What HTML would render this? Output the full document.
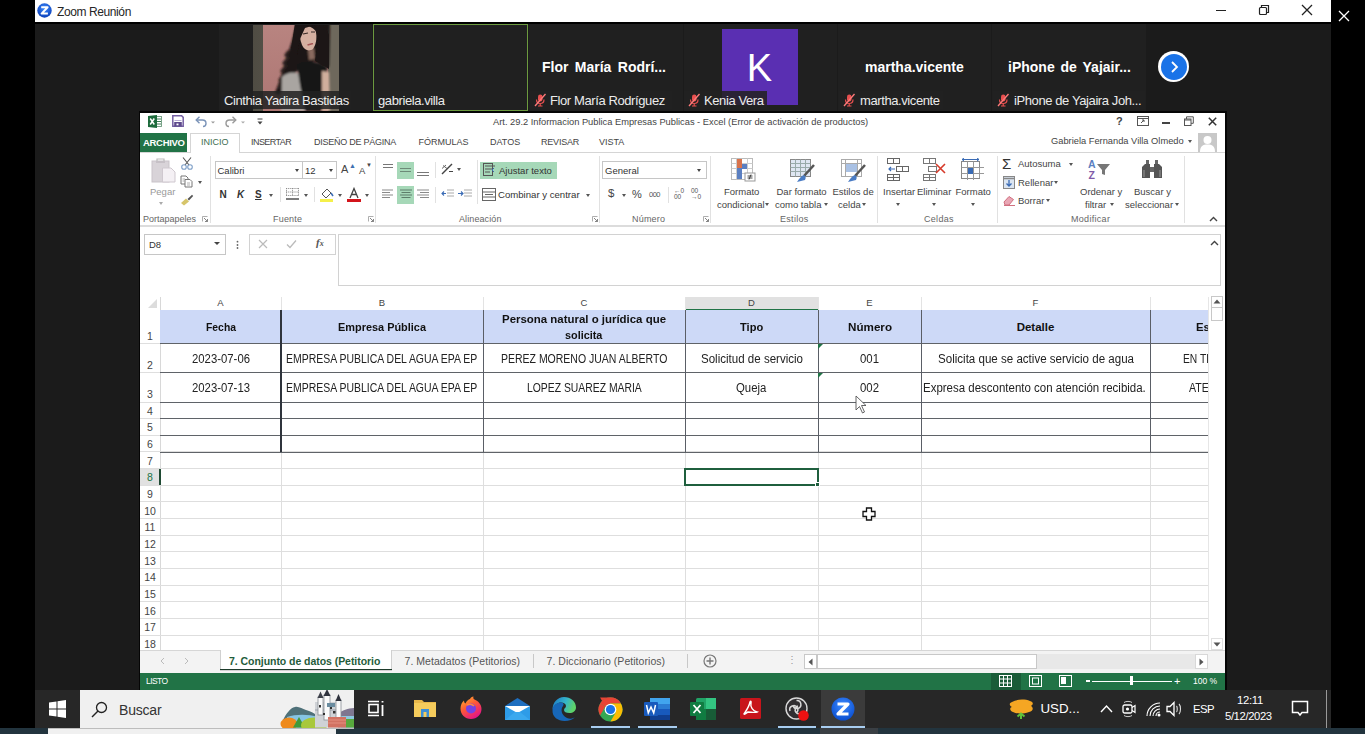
<!DOCTYPE html>
<html><head><meta charset="utf-8">
<style>
*{margin:0;padding:0;box-sizing:border-box}
html,body{width:1365px;height:734px;overflow:hidden;background:#000;font-family:"Liberation Sans",sans-serif}
.a{position:absolute}
#ztitle{left:35px;top:0;width:1296px;height:22px;background:#fff}
#zdark{left:35px;top:22px;width:1296px;height:668px;background:#1b1b1b}
#excel{left:140px;top:112px;width:1084px;height:578px;background:#fff;overflow:hidden}
#taskbar{left:35px;top:690px;width:1296px;height:38px;background:#282828}
#bstrip{left:0;top:728px;width:1365px;height:6px;background:#1d2b33}

.glab{height:18px;background:rgba(34,34,34,.86)}
.glab span{position:absolute;top:2px;font-size:13px;letter-spacing:-0.4px;color:#ececec;line-height:16px;white-space:nowrap}
.gbold{font-size:14px;font-weight:700;color:#fff;line-height:18px;white-space:nowrap}
.mic{position:absolute;left:3px;top:2px;width:14px;height:14px}

#excel{left:140px;top:112.5px;width:1085.2px;height:577.5px;background:#fff;overflow:hidden}
.t{position:absolute;white-space:nowrap;line-height:1}
.tab{font-size:9px;color:#444;top:138px}
.rl{font-size:9px;color:#444}
.gl{font-size:9px;color:#666;top:214.5px}
.sep{position:absolute;width:1px;background:#e1e1e1}
.hl{position:absolute;height:1px}
.vl{position:absolute;width:1px}
.cell{position:absolute;white-space:nowrap;line-height:1;color:#1a1a1a;text-align:center}
.rn{position:absolute;width:20px;left:140px;text-align:center;font-size:10.5px;color:#444;line-height:1}
.dd{position:absolute;width:0;height:0;border-left:2.5px solid transparent;border-right:2.5px solid transparent;border-top:3px solid #555}

#taskbar{left:35px;top:690px;width:1296px;height:38px;background:#272727}
#bstrip{left:0;top:728px;width:1365px;height:6px;background:#22343e}
</style></head><body>
<!-- zoom title -->
<div id="ztitle" class="a">
 <svg class="a" style="left:2px;top:3px" width="15" height="15" viewBox="0 0 15 15"><defs><radialGradient id="zg" cx="50%" cy="35%" r="65%"><stop offset="0" stop-color="#3d8bff"/><stop offset="1" stop-color="#0b3fb8"/></radialGradient></defs><circle cx="7.5" cy="7.5" r="7.2" fill="url(#zg)"/><path d="M4.2 4.3H10.6L4.6 10.6H10.9" stroke="#fff" stroke-width="2" fill="none" stroke-linejoin="round"/></svg>
 <div class="a" style="left:22px;top:3.5px;font-size:12px;letter-spacing:-0.4px;color:#262626;line-height:16px">Zoom Reunión</div>
 <div class="a" style="left:1181px;top:9.5px;width:10px;height:1px;background:#222"></div>
 <svg class="a" style="left:1223px;top:4px" width="12" height="12" viewBox="0 0 12 12"><rect x="1.5" y="3.5" width="7" height="7" fill="none" stroke="#222" stroke-width="1.2" rx="1"/><path d="M3.5 3.5V1.5H10.5V8.5H8.5" fill="none" stroke="#222" stroke-width="1.2"/></svg>
 <svg class="a" style="left:1266px;top:4px" width="12" height="12" viewBox="0 0 12 12"><path d="M1 1L11 11M11 1L1 11" stroke="#222" stroke-width="1.3"/></svg>
</div>
<div id="zdark" class="a"></div>
<div class="a" style="left:35px;top:22px;width:1296px;height:2px;background:#000"></div>

<svg class="a" style="left:1338px;top:10px" width="12" height="12" viewBox="0 0 12 12"><path d="M1 1L11 11M11 1L1 11" stroke="#fff" stroke-width="1.3"/></svg>
<!-- gallery tiles -->
<div class="a" style="left:219px;top:24px;width:153px;height:87px;background:#202020"></div>
<svg class="a" style="left:253px;top:24.5px" width="86" height="86" viewBox="0 0 86 86">
 <defs><filter id="bl" x="-20%" y="-20%" width="140%" height="140%"><feGaussianBlur stdDeviation="1.1"/></filter><filter id="bl2" x="-20%" y="-20%" width="140%" height="140%"><feGaussianBlur stdDeviation="0.7"/></filter>
 <linearGradient id="wall" x1="0" y1="0" x2="0" y2="1"><stop offset="0" stop-color="#b88480"/><stop offset="1" stop-color="#ad7673"/></linearGradient>
 <linearGradient id="lstrip" x1="0" y1="0" x2="1" y2="0"><stop offset="0" stop-color="#4f4c43"/><stop offset="1" stop-color="#6b675b"/></linearGradient></defs>
 <rect width="86" height="86" fill="url(#lstrip)"/>
 <rect x="10" width="66" height="86" fill="url(#wall)"/>
 <rect x="75" width="11" height="86" fill="#6e685c"/>
 <g filter="url(#bl)">
  <path d="M44 -3C41 6 40 14 37 22C35 28 34 32 32 38C30 44 29 48 27 54C26 58 24 62 22 68L26 70L30 66L34 62L40 50L50 40L62 36L76 42L77 -3Z" fill="#1a1413"/>
  <path d="M36 26L33 30L35 33L31 38L33 41L29 46L31 49L27 55L29 58L25 64" stroke="#2a201e" stroke-width="3" fill="none"/>
  <path d="M29 52C34 47 42 46 48 50L54 86H28Z" fill="#a9a5a1"/>
  <path d="M44 40C52 35 66 36 74 42L75 86H52L47 60Z" fill="#151515"/>
  <path d="M69 46L76 47L77 86H69Z" fill="#cfae9c"/>
  <path d="M55 25L61 23L62 34L56 35Z" fill="#8a6a5e"/>
 </g>
 <path d="M47 3C52 0 60 1 63 7C64 13 63 20 60 24C56 27 51 25 49 20C47 15 46 8 47 3Z" fill="#d5b0a1" filter="url(#bl2)"/>
 <path d="M50 9L55 8M58 7L62 7" stroke="#3a2a28" stroke-width="1.2" filter="url(#bl2)"/>
 <path d="M54.5 20L60 18.5" stroke="#a55555" stroke-width="1.6" filter="url(#bl2)"/>
 <path d="M42 -2C48 -4 58 -3 62 0L52 3L47 14L44 30L38 24Z" fill="#1c1514" filter="url(#bl2)"/>
 <path d="M62 2L70 -1L76 10L76 44L62 36L65 14Z" fill="#1c1514" filter="url(#bl2)"/>
</svg>
<div class="a glab" style="left:221px;top:91px;width:130px"><span style="left:3px">Cinthia Yadira Bastidas</span></div>
<div class="a" style="left:373px;top:24px;width:155px;height:87px;background:#202020;border:1px solid #6c9a3f"></div>
<div class="a glab" style="left:375px;top:91px;width:75px"><span style="left:3px">gabriela.villa</span></div>
<div class="a" style="left:529px;top:24px;width:154px;height:87px;background:#202020"></div>
<div class="a gbold" style="left:542px;top:58px;word-spacing:2.5px">Flor María Rodrí...</div>
<div class="a glab" style="left:530px;top:91px;width:142px"><svg class="mic" viewBox="0 0 14 14"><rect x="5" y="1.5" width="4.5" height="7" rx="2.2" fill="#e8504f"/><path d="M3.5 6.5C3.5 9 5 10.5 7.2 10.5C9.5 10.5 11 9 11 6.5M7.2 10.5V13M5 13H9.5" stroke="#e8504f" stroke-width="1.2" fill="none"/><path d="M2 13L12.5 1" stroke="#ff7a7a" stroke-width="1.3"/></svg><span style="left:20px">Flor María Rodríguez</span></div>
<div class="a" style="left:684px;top:24px;width:153px;height:87px;background:#202020"></div>
<div class="a" style="left:722px;top:29px;width:76px;height:76px;background:#5a2fb2"></div>
<div class="a" style="left:722px;top:47px;width:76px;text-align:center;color:#fff;font-size:38px;line-height:42px;padding-right:1px">K</div>
<div class="a glab" style="left:684px;top:91px;width:83px"><svg class="mic" viewBox="0 0 14 14"><rect x="5" y="1.5" width="4.5" height="7" rx="2.2" fill="#e8504f"/><path d="M3.5 6.5C3.5 9 5 10.5 7.2 10.5C9.5 10.5 11 9 11 6.5M7.2 10.5V13M5 13H9.5" stroke="#e8504f" stroke-width="1.2" fill="none"/><path d="M2 13L12.5 1" stroke="#ff7a7a" stroke-width="1.3"/></svg><span style="left:20px">Kenia Vera</span></div>
<div class="a" style="left:838px;top:24px;width:153px;height:87px;background:#202020"></div>
<div class="a gbold" style="left:865px;top:58px">martha.vicente</div>
<div class="a glab" style="left:839px;top:91px;width:104px"><svg class="mic" viewBox="0 0 14 14"><rect x="5" y="1.5" width="4.5" height="7" rx="2.2" fill="#e8504f"/><path d="M3.5 6.5C3.5 9 5 10.5 7.2 10.5C9.5 10.5 11 9 11 6.5M7.2 10.5V13M5 13H9.5" stroke="#e8504f" stroke-width="1.2" fill="none"/><path d="M2 13L12.5 1" stroke="#ff7a7a" stroke-width="1.3"/></svg><span style="left:21px">martha.vicente</span></div>
<div class="a" style="left:992px;top:24px;width:154px;height:87px;background:#202020"></div>
<div class="a gbold" style="left:1008px;top:58px;word-spacing:2px">iPhone de Yajair...</div>
<div class="a glab" style="left:993px;top:91px;width:152px"><svg class="mic" viewBox="0 0 14 14"><rect x="5" y="1.5" width="4.5" height="7" rx="2.2" fill="#e8504f"/><path d="M3.5 6.5C3.5 9 5 10.5 7.2 10.5C9.5 10.5 11 9 11 6.5M7.2 10.5V13M5 13H9.5" stroke="#e8504f" stroke-width="1.2" fill="none"/><path d="M2 13L12.5 1" stroke="#ff7a7a" stroke-width="1.3"/></svg><span style="left:21px">iPhone de Yajaira Joh...</span></div>
<div class="a" style="left:1158px;top:51px;width:31px;height:31px;border-radius:50%;background:#fff"></div>
<div class="a" style="left:1160.5px;top:53.5px;width:26px;height:26px;border-radius:50%;background:#1a73e8"></div>
<svg class="a" style="left:1166px;top:59px" width="16" height="16" viewBox="0 0 16 16"><path d="M6 3L11 8L6 13" stroke="#fff" stroke-width="1.8" fill="none"/></svg>

<div class="a" style="left:138.5px;top:111px;width:1088.5px;height:580px;background:#050505"></div>
<div id="excel" class="a"></div>
<svg class="a" style="left:148px;top:115px" width="14" height="13" viewBox="0 0 14 13">
<rect x="6" y="1.5" width="7.5" height="10" fill="#fff" stroke="#6c9a7c" stroke-width="0.9"/>
<path d="M7.5 4H13M7.5 6.5H13M7.5 9H13" stroke="#3f7d57" stroke-width="1"/>
<path d="M0 1L9 0V13L0 12Z" fill="#1d6b3c"/>
<path d="M2.2 3.5L6.3 9.5M6.3 3.5L2.2 9.5" stroke="#fff" stroke-width="1.5"/></svg>
<svg class="a" style="left:171.5px;top:115px" width="12" height="12" viewBox="0 0 12 12">
<path d="M0.8 0.8H9.6L11.2 2.4V11.2H0.8Z" fill="#fff" stroke="#7560a3" stroke-width="1.5"/>
<rect x="2.2" y="7" width="7.6" height="4.5" fill="#5e4a8c"/><rect x="4.5" y="8.5" width="2" height="1.8" fill="#fff"/><path d="M2.5 5.5H9.5" stroke="#b9acd3" stroke-width="1"/></svg>
<svg class="a" style="left:194px;top:115px" width="24" height="13" viewBox="0 0 24 13">
<path d="M3 5H8.5C11 5 12 7 12 8.5C12 10 11 11.5 9 11.5" fill="none" stroke="#7a93b8" stroke-width="1.4"/><path d="M5.5 1.8L2.2 5L5.5 8.2" fill="none" stroke="#7a93b8" stroke-width="1.4"/>
<path d="M17 6.5H21L19 8.5Z" fill="#999"/></svg>
<svg class="a" style="left:225px;top:115px" width="24" height="13" viewBox="0 0 24 13">
<path d="M10 5H4.5C2 5 1 7 1 8.5C1 10 2 11.5 4 11.5" fill="none" stroke="#9a9a9a" stroke-width="1.4"/><path d="M7.5 1.8L10.8 5L7.5 8.2" fill="none" stroke="#9a9a9a" stroke-width="1.4"/>
<path d="M16 6.5H20L18 8.5Z" fill="#aaa"/></svg>
<svg class="a" style="left:256px;top:117px" width="8" height="9" viewBox="0 0 8 9"><path d="M1.5 2H6.5" stroke="#444" stroke-width="1"/><path d="M1.5 4.5H6.5L4 7.5Z" fill="#444"/></svg>
<div class="t" style="left:493px;top:117.5px;font-size:9.3px;color:#444">Art. 29.2 Informacion Publica Empresas Publicas - Excel (Error de activación de productos)</div>
<div class="t" style="left:1116px;top:116px;font-size:11px;font-weight:700;color:#444">?</div>
<svg class="a" style="left:1137px;top:116px" width="12" height="10" viewBox="0 0 12 10"><rect x="0.5" y="0.5" width="11" height="9" fill="none" stroke="#555"/><path d="M0.5 2.5H11.5" stroke="#555"/><path d="M4 7L7 4M5 4H7V6" stroke="#555" fill="none"/></svg>
<div class="a" style="left:1162px;top:122px;width:8px;height:1.5px;background:#444"></div>
<svg class="a" style="left:1184px;top:116px" width="10" height="10" viewBox="0 0 10 10"><rect x="0.5" y="3" width="6.5" height="6.5" fill="none" stroke="#555"/><path d="M2.5 3V0.8H9.3V7.3H7" fill="none" stroke="#555"/><path d="M0.5 4H7" stroke="#555"/></svg>
<svg class="a" style="left:1208px;top:117px" width="9" height="9" viewBox="0 0 9 9"><path d="M0.8 0.8L8.2 8.2M8.2 0.8L0.8 8.2" stroke="#333" stroke-width="1.5"/></svg>
<div class="a" style="left:140px;top:133px;width:47px;height:19px;background:#217346"></div>
<div class="t" style="left:143px;top:138px;font-size:9.5px;font-weight:700;color:#fff;letter-spacing:-0.3px">ARCHIVO</div>
<div class="hl" style="left:140px;top:152px;width:1085px;background:#d5d5d5"></div>
<div class="a" style="left:190px;top:133px;width:50px;height:20px;background:#fff;border:1px solid #d5d5d5;border-bottom:none"></div>
<div class="t tab" style="left:201px;color:#3d6e50">INICIO</div>
<div class="t tab" style="left:251px;letter-spacing:-0.55px">INSERTAR</div>
<div class="t tab" style="left:314px;letter-spacing:-0.25px">DISEÑO DE PÁGINA</div>
<div class="t tab" style="left:418.5px;letter-spacing:0px">FÓRMULAS</div>
<div class="t tab" style="left:490px;letter-spacing:0px">DATOS</div>
<div class="t tab" style="left:541px;letter-spacing:-0.2px">REVISAR</div>
<div class="t tab" style="left:599px;letter-spacing:0px">VISTA</div>
<div class="t" style="left:1051px;top:137px;font-size:9.3px;color:#444">Gabriela Fernanda Villa Olmedo</div>
<div class="dd" style="left:1188px;top:140px"></div>
<svg class="a" style="left:1198px;top:133px" width="19" height="19" viewBox="0 0 19 19"><rect width="19" height="19" fill="#c8c8c8"/><circle cx="9.5" cy="7" r="4" fill="#fff"/><path d="M2 19C2 13 5 11.5 9.5 11.5C14 11.5 17 13 17 19Z" fill="#fff"/></svg>
<div class="hl" style="left:140px;top:225px;width:1085px;height:1.5px;background:#dcdcdc"></div>
<div class="sep" style="left:210px;top:156px;height:67px"></div>
<div class="sep" style="left:375px;top:156px;height:67px"></div>
<div class="sep" style="left:599px;top:156px;height:67px"></div>
<div class="sep" style="left:710px;top:156px;height:67px"></div>
<div class="sep" style="left:877px;top:156px;height:67px"></div>
<div class="sep" style="left:997px;top:156px;height:67px"></div>
<div class="sep" style="left:1184px;top:156px;height:67px"></div>
<div class="t gl" style="left:143px;letter-spacing:0px">Portapapeles</div>
<div class="t gl" style="left:273px;letter-spacing:0.2px">Fuente</div>
<div class="t gl" style="left:459px;letter-spacing:0.1px">Alineación</div>
<div class="t gl" style="left:632px;letter-spacing:0.2px">Número</div>
<div class="t gl" style="left:780px;letter-spacing:0.3px">Estilos</div>
<div class="t gl" style="left:924px;letter-spacing:0.3px">Celdas</div>
<div class="t gl" style="left:1071px;letter-spacing:0.3px">Modificar</div>
<svg class="a" style="left:202px;top:216px" width="6" height="6" viewBox="0 0 6 6"><path d="M0.5 5.5V0.5H5.5" fill="none" stroke="#999" stroke-width="0.8"/><path d="M2 2L5.5 5.5M5.5 3V5.5H3" fill="none" stroke="#777" stroke-width="0.9"/></svg>
<svg class="a" style="left:368px;top:216px" width="6" height="6" viewBox="0 0 6 6"><path d="M0.5 5.5V0.5H5.5" fill="none" stroke="#999" stroke-width="0.8"/><path d="M2 2L5.5 5.5M5.5 3V5.5H3" fill="none" stroke="#777" stroke-width="0.9"/></svg>
<svg class="a" style="left:592px;top:216px" width="6" height="6" viewBox="0 0 6 6"><path d="M0.5 5.5V0.5H5.5" fill="none" stroke="#999" stroke-width="0.8"/><path d="M2 2L5.5 5.5M5.5 3V5.5H3" fill="none" stroke="#777" stroke-width="0.9"/></svg>
<svg class="a" style="left:703px;top:216px" width="6" height="6" viewBox="0 0 6 6"><path d="M0.5 5.5V0.5H5.5" fill="none" stroke="#999" stroke-width="0.8"/><path d="M2 2L5.5 5.5M5.5 3V5.5H3" fill="none" stroke="#777" stroke-width="0.9"/></svg>
<svg class="a" style="left:151px;top:158px" width="26" height="25" viewBox="0 0 26 25">
<rect x="1" y="3" width="17" height="21" fill="#d8d3d8" stroke="#c9c3c9"/><path d="M6 3V1H13V3" fill="none" stroke="#bbb" stroke-width="1.2"/><rect x="5" y="3" width="9" height="2" fill="#c6c0c6"/>
<path d="M11.5 10H20L24 14V24H11.5Z" fill="#f4f0f4" stroke="#cfc8cf"/></svg>
<div class="t rl" style="left:150px;top:187px;font-size:9.5px;color:#999">Pegar</div>
<div class="dd" style="left:159px;top:202px;border-top-color:#aaa"></div>
<svg class="a" style="left:180px;top:157px" width="14" height="13" viewBox="0 0 14 13"><path d="M3 0.5L9 8M11 0.5L5 8" stroke="#555" stroke-width="1.1"/><circle cx="4" cy="10" r="2.3" fill="none" stroke="#7fa0c8" stroke-width="1.1"/><circle cx="10" cy="10" r="2.3" fill="none" stroke="#7fa0c8" stroke-width="1.1"/></svg>
<svg class="a" style="left:180px;top:175px" width="14" height="13" viewBox="0 0 14 13"><path d="M1 1H6L8 3V9H1Z" fill="#fff" stroke="#777"/><path d="M5 4.5H10L12 6.5V12H5Z" fill="#fff" stroke="#777"/><path d="M2.5 4H5M2.5 6H4.5M7 8H10M7 10H10" stroke="#999" stroke-width="0.8"/></svg>
<div class="dd" style="left:198px;top:181px"></div>
<svg class="a" style="left:180px;top:194px" width="14" height="12" viewBox="0 0 14 12"><path d="M1 9L6 4.5L9 7.5L4 11.5Z" fill="#d6c56a"/><path d="M7.5 5L12 0.8L13.2 2L9 6.5" fill="#555"/></svg>
<div class="a" style="left:215px;top:161px;width:122px;height:18px;border:1px solid #c6c6c6"></div>
<div class="vl" style="left:302px;top:162px;height:16px;background:#c6c6c6"></div>
<div class="t" style="left:217.5px;top:165.5px;font-size:9.5px;color:#333">Calibri</div>
<div class="dd" style="left:295px;top:169px;border-top-color:#444"></div>
<div class="t" style="left:305px;top:165.5px;font-size:9.5px;color:#333">12</div>
<div class="dd" style="left:329px;top:169px;border-top-color:#444"></div>
<div class="t" style="left:341px;top:164px;font-size:11px;color:#444">A</div><div class="t" style="left:349px;top:162px;font-size:7px;color:#3f6fb0">&#9650;</div>
<div class="t" style="left:359px;top:165.5px;font-size:9.5px;color:#444">A</div><div class="t" style="left:366px;top:162px;font-size:6px;color:#444">&#9660;</div>
<div class="t" style="left:219.5px;top:189.5px;font-size:10px;font-weight:700;color:#333">N</div>
<div class="t" style="left:237px;top:189.5px;font-size:10px;font-weight:700;font-style:italic;color:#333">K</div>
<div class="t" style="left:255px;top:189.5px;font-size:10px;font-weight:700;color:#333;text-decoration:underline">S</div>
<div class="dd" style="left:269px;top:194px"></div>
<div class="sep" style="left:280px;top:187px;height:15px"></div>
<svg class="a" style="left:286px;top:188px" width="13" height="12" viewBox="0 0 13 12"><path d="M0 0.5H13M0 4H13M0 7.5H13" stroke="#888" stroke-width="0.9" stroke-dasharray="1.2 0.9"/><path d="M0.5 0V8M6.5 0V8M12.5 0V8" stroke="#888" stroke-width="0.9" stroke-dasharray="1.2 0.9"/><path d="M0 11H13" stroke="#444" stroke-width="1.4"/></svg>
<div class="dd" style="left:304px;top:194px"></div>
<div class="sep" style="left:314px;top:187px;height:15px"></div>
<svg class="a" style="left:320px;top:187px" width="14" height="15" viewBox="0 0 14 15"><path d="M2 7L7 2L11 6L6 11Z" fill="#fff" stroke="#555"/><path d="M11 6L13 9" stroke="#3a6bb5" stroke-width="1.5"/><rect x="0" y="12" width="13" height="3" fill="#f5f04a"/></svg>
<div class="dd" style="left:338px;top:194px"></div>
<svg class="a" style="left:347px;top:187px" width="14" height="15" viewBox="0 0 14 15"><path d="M3 11L7 1.5L11 11M4.5 7.5H9.5" fill="none" stroke="#444" stroke-width="1.3"/><rect x="0" y="12" width="14" height="3" fill="#d3141b"/></svg>
<div class="dd" style="left:365px;top:194px"></div>
<div class="a" style="left:397px;top:161.5px;width:17px;height:17px;background:#a6d8b8"></div>
<div class="a" style="left:397px;top:186px;width:17px;height:17.5px;background:#a6d8b8"></div>
<svg class="a" style="left:383px;top:163.5px" width="10" height="4.5"><path d="M0 0.5H10M0 3.5H10" stroke="#777" stroke-width="1"/></svg>
<svg class="a" style="left:400px;top:167.5px" width="11" height="4.5"><path d="M0 0.5H11M0 3.5H11" stroke="#6d8a78" stroke-width="1"/></svg>
<svg class="a" style="left:417px;top:172px" width="12" height="4.5"><path d="M0 0.5H12M0 3.5H12" stroke="#777" stroke-width="1"/></svg>
<div class="sep" style="left:435px;top:162px;height:16px"></div>
<svg class="a" style="left:440px;top:162px" width="14" height="14" viewBox="0 0 14 14"><path d="M2 12L12 2" stroke="#444" stroke-width="1.4"/><path d="M3 3.5L7 6.5M2 6.5L6 3" stroke="#666" stroke-width="1"/><path d="M9 9.5L13 9.5" stroke="#444"/></svg>
<div class="dd" style="left:457px;top:168px"></div>
<svg class="a" style="left:382px;top:189px" width="48" height="10"><path d="M0 1H11M0 3.5H8M0 6H11M0 8.5H8" stroke="#8a8a8a" stroke-width="1.1"/><path d="M18 1H30M19.5 3.5H28.5M18 6H30M19.5 8.5H28.5" stroke="#5d7d6a" stroke-width="1.1"/><path d="M35 1H47M38 3.5H47M35 6H47M38 8.5H47" stroke="#8a8a8a" stroke-width="1.1"/></svg>
<div class="sep" style="left:435px;top:187px;height:16px"></div>
<svg class="a" style="left:441px;top:189px" width="32" height="10" viewBox="0 0 32 10"><path d="M6 1H13M6 4H13M6 7H13" stroke="#aaa"/><path d="M5 4.5H1M3 2.5L1 4.5L3 6.5" stroke="#3a6bb5" fill="none" stroke-width="1.1"/><path d="M23 1H31M23 4H31M23 7H31" stroke="#aaa"/><path d="M17 4.5H22M20 2.5L22 4.5L20 6.5" stroke="#3a6bb5" fill="none" stroke-width="1.1"/></svg>
<div class="sep" style="left:477px;top:160px;height:44px"></div>
<div class="a" style="left:480px;top:161.5px;width:76.5px;height:17px;background:#a6d8b8"></div>
<svg class="a" style="left:483px;top:163px" width="14" height="13" viewBox="0 0 14 13"><rect x="0.5" y="0.5" width="9" height="12" fill="none" stroke="#555"/><path d="M2 3H12M2 6H9M2 9H7" stroke="#555"/><path d="M11 5L9 7L11 9" stroke="#3a6bb5" fill="none"/></svg>
<div class="t" style="left:499px;top:165.5px;font-size:9.5px;color:#333">Ajustar texto</div>
<svg class="a" style="left:482px;top:188px" width="14" height="13" viewBox="0 0 14 13"><rect x="0.5" y="0.5" width="13" height="12" fill="none" stroke="#666"/><path d="M0.5 4H13.5M0.5 9H13.5M3 6.5H11" stroke="#666"/></svg>
<div class="t" style="left:498px;top:190px;font-size:9.6px;color:#333">Combinar y centrar</div>
<div class="dd" style="left:586px;top:194px"></div>
<div class="a" style="left:602px;top:161px;width:105px;height:18px;border:1px solid #c6c6c6"></div>
<div class="t" style="left:605px;top:165.5px;font-size:9.5px;color:#333">General</div>
<div class="dd" style="left:697px;top:169px;border-top-color:#444"></div>
<div class="t" style="left:608px;top:188px;font-size:11.5px;color:#444">$</div>
<div class="dd" style="left:622px;top:194px"></div>
<div class="t" style="left:632px;top:189px;font-size:11px;color:#444">%</div>
<div class="t" style="left:649px;top:191px;font-size:7.5px;color:#555;letter-spacing:-0.5px">000</div>
<div class="sep" style="left:668px;top:187px;height:16px"></div>
<div class="t" style="left:674px;top:188px;font-size:6.5px;color:#555;line-height:6px">&#8592;0<br>00</div>
<div class="t" style="left:691px;top:188px;font-size:6.5px;color:#555;line-height:6px">00<br>&#8594;0</div>
<svg class="a" style="left:731px;top:158px" width="25" height="24" viewBox="0 0 25 24">
<rect x="0.5" y="0.5" width="21" height="21" fill="#fff" stroke="#bbb"/><path d="M0.5 5.5H21.5M0.5 10.5H21.5M0.5 15.5H21.5M5.5 0.5V21.5M16.5 0.5V21.5" stroke="#ccc"/>
<rect x="6" y="1" width="5" height="9" fill="#d9734c"/><rect x="6" y="10" width="5" height="11" fill="#5b7fc1"/><rect x="11" y="6" width="5" height="5" fill="#5b7fc1"/>
<rect x="14" y="15" width="10" height="8" fill="#fff" stroke="#999"/><path d="M16.5 18H21.5M16.5 20H21.5M20 16.5L18 21.5" stroke="#333" stroke-width="0.9"/></svg>
<div class="t rl" style="left:724px;top:186.5px;font-size:9.5px">Formato</div>
<div class="t rl" style="left:717px;top:199.5px;font-size:9.5px">condicional</div>
<div class="dd" style="left:765px;top:203px"></div>
<svg class="a" style="left:790px;top:159px" width="26" height="24" viewBox="0 0 26 24">
<rect x="0.5" y="0.5" width="20" height="17" fill="#dfe6f2" stroke="#888"/><path d="M0.5 4.5H20.5M0.5 8.5H20.5M0.5 12.5H20.5M5.5 0.5V17.5M10.5 0.5V17.5M15.5 0.5V17.5" stroke="#9aa"/>
<path d="M24 6L14 17" stroke="#555" stroke-width="2.5"/><path d="M14 16C11 17 9 20 7 23L15 21C16 19 16 17 14 16Z" fill="#4a7cc4"/></svg>
<div class="t rl" style="left:776.5px;top:186.5px;font-size:9.5px">Dar formato</div>
<div class="t rl" style="left:775px;top:199.5px;font-size:9.5px">como tabla</div>
<div class="dd" style="left:824px;top:203px"></div>
<svg class="a" style="left:841px;top:159px" width="26" height="24" viewBox="0 0 26 24">
<rect x="0.5" y="0.5" width="20" height="17" fill="#fff" stroke="#aaa"/><path d="M0.5 4.5H20.5M4.5 0.5V17.5M16.5 0.5V17.5" stroke="#aaa"/><rect x="5" y="5" width="11" height="8" fill="#a9c1e4"/>
<path d="M24 6L14 17" stroke="#555" stroke-width="2.5"/><path d="M14 16C11 17 9 20 7 23L15 21C16 19 16 17 14 16Z" fill="#4a7cc4"/></svg>
<div class="t rl" style="left:832.5px;top:186.5px;font-size:9.5px">Estilos de</div>
<div class="t rl" style="left:838px;top:199.5px;font-size:9.5px">celda</div>
<div class="dd" style="left:862px;top:203px"></div>
<svg class="a" style="left:887px;top:158px" width="22" height="23" viewBox="0 0 22 23">
<rect x="0.5" y="0.5" width="12" height="5" fill="#fff" stroke="#666"/><path d="M6.5 0.5V5.5" stroke="#666"/>
<rect x="9.5" y="8.5" width="12" height="5" fill="#fff" stroke="#666"/><path d="M15.5 8.5V13.5" stroke="#666"/>
<path d="M8 11H2M4 9L2 11L4 13" stroke="#3a6bb5" fill="none" stroke-width="1.2"/>
<rect x="0.5" y="16.5" width="12" height="6" fill="#fff" stroke="#666"/><path d="M0.5 19.5H12.5M6.5 16.5V22.5" stroke="#666"/></svg>
<div class="t rl" style="left:883px;top:186.5px;font-size:9.5px">Insertar</div>
<div class="dd" style="left:896px;top:203px"></div>
<svg class="a" style="left:923px;top:158px" width="24" height="23" viewBox="0 0 24 23">
<rect x="0.5" y="0.5" width="12" height="5" fill="#fff" stroke="#777"/><rect x="5.5" y="8.5" width="8" height="5" fill="#fff" stroke="#777"/>
<rect x="0.5" y="16.5" width="12" height="6" fill="#fff" stroke="#777"/><path d="M0.5 19.5H12.5M6.5 16.5V22.5M6.5 0.5V5.5" stroke="#777"/>
<path d="M13 6L22 15M22 6L13 15" stroke="#d63a2a" stroke-width="1.6"/></svg>
<div class="t rl" style="left:917px;top:186.5px;font-size:9.5px">Eliminar</div>
<div class="dd" style="left:932px;top:203px"></div>
<svg class="a" style="left:961px;top:158px" width="24" height="23" viewBox="0 0 24 23">
<rect x="0.5" y="3.5" width="18" height="17" fill="#fff" stroke="#888"/><path d="M0.5 9.5H23M0.5 15.5H23M6.5 3.5V22M12.5 3.5V22M18.5 9.5V20" stroke="#999"/>
<rect x="7" y="10" width="5" height="6" fill="#3a6bb5"/><path d="M1 1.5H18M3 0L1 1.5L3 3M16 0L18 1.5L16 3" stroke="#3a6bb5" fill="none"/></svg>
<div class="t rl" style="left:955.5px;top:186.5px;font-size:9.5px">Formato</div>
<div class="dd" style="left:971px;top:203px"></div>
<div class="t" style="left:1002px;top:155.5px;font-size:15px;color:#333">&#931;</div>
<div class="t rl" style="left:1018px;top:159px;font-size:9.5px">Autosuma</div>
<div class="dd" style="left:1069px;top:163px"></div>
<svg class="a" style="left:1003px;top:176px" width="12" height="13" viewBox="0 0 12 13"><rect x="0.5" y="0.5" width="11" height="12" fill="#dbe5f1" stroke="#888"/><path d="M0.5 2.5H11.5" stroke="#888" stroke-width="1.5"/><path d="M6 4V10M3.5 7.5L6 10L8.5 7.5" stroke="#3a6bb5" fill="none" stroke-width="1.3"/></svg>
<div class="t rl" style="left:1018px;top:177.5px;font-size:9.5px">Rellenar</div>
<div class="dd" style="left:1054px;top:181px"></div>
<svg class="a" style="left:1003px;top:195px" width="13" height="11" viewBox="0 0 13 11"><path d="M1 7L6 1.5L10.5 4.5L6 10H2Z" fill="#e9a7b5" stroke="#d07080"/><path d="M1 10.5H12" stroke="#d07080"/></svg>
<div class="t rl" style="left:1018px;top:195.5px;font-size:9.5px">Borrar</div>
<div class="dd" style="left:1046px;top:199px"></div>
<svg class="a" style="left:1088px;top:158px" width="24" height="22" viewBox="0 0 24 22">
<text x="0" y="10" font-family="Liberation Sans" font-weight="700" font-size="10.5" fill="#5b7fc1">A</text><text x="0.5" y="21" font-family="Liberation Sans" font-weight="700" font-size="10.5" fill="#7f5aa8">Z</text>
<path d="M9 6H22L17 12V17L14 16V12Z" fill="#777"/></svg>
<div class="t rl" style="left:1080px;top:186.5px;font-size:9.5px">Ordenar y</div>
<div class="t rl" style="left:1085px;top:199.5px;font-size:9.5px">filtrar</div>
<div class="dd" style="left:1110px;top:203px"></div>
<svg class="a" style="left:1141px;top:159px" width="22" height="20" viewBox="0 0 22 20">
<rect x="5" y="1" width="3" height="5" fill="#666"/><rect x="14" y="1" width="3" height="5" fill="#666"/>
<path d="M1 8L4 5H9V19H1Z" fill="#555"/><path d="M21 8L18 5H13V19H21Z" fill="#555"/><rect x="9" y="8" width="4" height="5" fill="#666"/>
<path d="M3 11V18M19 11V18" stroke="#999" stroke-width="1"/></svg>
<div class="t rl" style="left:1134px;top:186.5px;font-size:9.5px">Buscar y</div>
<div class="t rl" style="left:1125px;top:199.5px;font-size:9.5px">seleccionar</div>
<div class="dd" style="left:1175px;top:203px"></div>
<svg class="a" style="left:1209px;top:216px" width="9" height="6" viewBox="0 0 9 6"><path d="M1 5L4.5 1.5L8 5" stroke="#444" stroke-width="1.4" fill="none"/></svg>
<div class="a" style="left:144px;top:234px;width:82px;height:21px;border:1px solid #c6c6c6"></div>
<div class="t" style="left:149px;top:240px;font-size:9.5px;color:#333">D8</div>
<div class="dd" style="left:213.5px;top:242px;border-left-width:3px;border-right-width:3px;border-top:3.5px solid #444"></div>
<svg class="a" style="left:235.5px;top:239.5px" width="3" height="10"><circle cx="1.5" cy="1.7" r="0.9" fill="#666"/><circle cx="1.5" cy="5" r="0.9" fill="#666"/><circle cx="1.5" cy="8" r="0.9" fill="#666"/></svg>
<div class="a" style="left:249px;top:234px;width:87px;height:21px;border:1px solid #d2d2d2"></div>
<svg class="a" style="left:258px;top:239px" width="10" height="10" viewBox="0 0 10 10"><path d="M1 1L9 9M9 1L1 9" stroke="#bbb" stroke-width="1.2"/></svg>
<svg class="a" style="left:286px;top:239px" width="11" height="10" viewBox="0 0 11 10"><path d="M1 5.5L4 8.5L10 1.5" stroke="#bbb" stroke-width="1.3" fill="none"/></svg>
<div class="t" style="left:316px;top:237px;font-size:11px;font-style:italic;font-family:'Liberation Serif';color:#555;font-weight:700">f<span style="font-size:8px">x</span></div>
<div class="a" style="left:338px;top:234px;width:883px;height:52px;border:1px solid #d2d2d2"></div>
<svg class="a" style="left:1210px;top:240px" width="9" height="6" viewBox="0 0 9 6"><path d="M1 5L4.5 1.5L8 5" stroke="#444" stroke-width="1.4" fill="none"/></svg>
<div class="a" style="left:140px;top:297px;width:1068px;height:13px;background:#fff"></div>
<div class="a" style="left:685px;top:297px;width:133px;height:13px;background:#e1e1e1"></div>
<div class="hl" style="left:685px;top:309px;width:133px;height:1.5px;background:#217346"></div>
<svg class="a" style="left:148px;top:299px" width="9" height="9"><path d="M9 0V9H0Z" fill="#dcdcdc"/></svg>
<div class="t" style="left:160px;width:121px;text-align:center;top:297.5px;font-size:9.5px;color:#444">A</div>
<div class="t" style="left:281px;width:202px;text-align:center;top:297.5px;font-size:9.5px;color:#444">B</div>
<div class="t" style="left:483px;width:202px;text-align:center;top:297.5px;font-size:9.5px;color:#444">C</div>
<div class="t" style="left:685px;width:133px;text-align:center;top:297.5px;font-size:9.5px;color:#444">D</div>
<div class="t" style="left:818px;width:103px;text-align:center;top:297.5px;font-size:9.5px;color:#444">E</div>
<div class="t" style="left:921px;width:229px;text-align:center;top:297.5px;font-size:9.5px;color:#444">F</div>
<div class="vl" style="left:281px;top:297px;height:13px;background:#e3e3e3"></div>
<div class="vl" style="left:483px;top:297px;height:13px;background:#e3e3e3"></div>
<div class="vl" style="left:685px;top:297px;height:13px;background:#e3e3e3"></div>
<div class="vl" style="left:818px;top:297px;height:13px;background:#e3e3e3"></div>
<div class="vl" style="left:921px;top:297px;height:13px;background:#e3e3e3"></div>
<div class="vl" style="left:1150px;top:297px;height:13px;background:#e3e3e3"></div>
<div class="vl" style="left:160px;top:297px;height:353px;background:#d8d8d8"></div>
<div class="a" style="left:140px;top:468px;width:20px;height:17px;background:#e1e1e1"></div>
<div class="vl" style="left:159px;top:468px;height:17px;width:1.8px;background:#1f4a33"></div>
<div class="a" style="left:160px;top:310px;width:1048px;height:33px;background:#cdd9f7"></div>
<div class="hl" style="left:140px;top:418.16px;width:1068px;background:#dedede"></div>
<div class="hl" style="left:140px;top:434.82px;width:1068px;background:#dedede"></div>
<div class="hl" style="left:140px;top:451.48px;width:1068px;background:#dedede"></div>
<div class="hl" style="left:140px;top:468.14px;width:1068px;background:#dedede"></div>
<div class="hl" style="left:140px;top:484.8px;width:1068px;background:#dedede"></div>
<div class="hl" style="left:140px;top:501.46px;width:1068px;background:#dedede"></div>
<div class="hl" style="left:140px;top:518.12px;width:1068px;background:#dedede"></div>
<div class="hl" style="left:140px;top:534.78px;width:1068px;background:#dedede"></div>
<div class="hl" style="left:140px;top:551.44px;width:1068px;background:#dedede"></div>
<div class="hl" style="left:140px;top:568.1px;width:1068px;background:#dedede"></div>
<div class="hl" style="left:140px;top:584.76px;width:1068px;background:#dedede"></div>
<div class="hl" style="left:140px;top:601.42px;width:1068px;background:#dedede"></div>
<div class="hl" style="left:140px;top:618.08px;width:1068px;background:#dedede"></div>
<div class="hl" style="left:140px;top:634.74px;width:1068px;background:#dedede"></div>
<div class="hl" style="left:140px;top:651.4px;width:1068px;background:#dedede"></div>
<div class="hl" style="left:140px;top:343px;width:20px;background:#dedede"></div>
<div class="hl" style="left:140px;top:372px;width:20px;background:#dedede"></div>
<div class="hl" style="left:140px;top:401.5px;width:20px;background:#dedede"></div>
<div class="vl" style="left:281px;top:451px;height:199px;background:#dedede"></div>
<div class="vl" style="left:483px;top:451px;height:199px;background:#dedede"></div>
<div class="vl" style="left:685px;top:451px;height:199px;background:#dedede"></div>
<div class="vl" style="left:818px;top:451px;height:199px;background:#dedede"></div>
<div class="vl" style="left:921px;top:451px;height:199px;background:#dedede"></div>
<div class="vl" style="left:1150px;top:451px;height:199px;background:#dedede"></div>
<div class="hl" style="left:160px;top:343px;width:1048px;background:#5f6368"></div>
<div class="hl" style="left:160px;top:372px;width:1048px;background:#5f6368"></div>
<div class="hl" style="left:160px;top:401.5px;width:1048px;background:#5f6368"></div>
<div class="hl" style="left:160px;top:418.2px;width:1048px;background:#5f6368"></div>
<div class="hl" style="left:160px;top:434.9px;width:1048px;background:#5f6368"></div>
<div class="hl" style="left:160px;top:451.6px;width:1048px;background:#5f6368"></div>
<div class="vl" style="left:483px;top:310px;height:142px;background:#5a5e66"></div>
<div class="vl" style="left:685px;top:310px;height:142px;background:#5a5e66"></div>
<div class="vl" style="left:818px;top:310px;height:142px;background:#5a5e66"></div>
<div class="vl" style="left:921px;top:310px;height:142px;background:#5a5e66"></div>
<div class="vl" style="left:1150px;top:310px;height:142px;background:#5a5e66"></div>
<div class="vl" style="left:280px;top:310px;height:142px;width:2px;background:#2f343c"></div>
<div class="rn" style="top:330.5px;color:#444">1</div>
<div class="rn" style="top:359.5px;color:#444">2</div>
<div class="rn" style="top:389.0px;color:#444">3</div>
<div class="rn" style="top:405.66px;color:#444">4</div>
<div class="rn" style="top:422.32px;color:#444">5</div>
<div class="rn" style="top:438.98px;color:#444">6</div>
<div class="rn" style="top:455.64px;color:#444">7</div>
<div class="rn" style="top:472.3px;color:#217346">8</div>
<div class="rn" style="top:488.96px;color:#444">9</div>
<div class="rn" style="top:505.62px;color:#444">10</div>
<div class="rn" style="top:522.28px;color:#444">11</div>
<div class="rn" style="top:538.94px;color:#444">12</div>
<div class="rn" style="top:555.6px;color:#444">13</div>
<div class="rn" style="top:572.26px;color:#444">14</div>
<div class="rn" style="top:588.92px;color:#444">15</div>
<div class="rn" style="top:605.58px;color:#444">16</div>
<div class="rn" style="top:622.24px;color:#444">17</div>
<div class="rn" style="top:638.9px;color:#444">18</div>
<div class="a" style="left:0;top:0;width:1208px;height:650px;overflow:hidden">
<div class="t" style="left:205.50px;top:321.67px;font-size:11.5px;color:#111;font-weight:700;transform:scaleX(0.9026);transform-origin:0 0;">Fecha</div>
<div class="t" style="left:338.00px;top:321.67px;font-size:11.5px;color:#111;font-weight:700;transform:scaleX(0.9495);transform-origin:0 0;">Empresa Pública</div>
<div class="t" style="left:502.00px;top:313.57px;font-size:11.5px;color:#111;font-weight:700;transform:scaleX(0.9947);transform-origin:0 0;">Persona natural o jurídica que</div>
<div class="t" style="left:565.30px;top:329.77px;font-size:11.5px;color:#111;font-weight:700;transform:scaleX(0.9438);transform-origin:0 0;">solicita</div>
<div class="t" style="left:739.90px;top:321.67px;font-size:11.5px;color:#111;font-weight:700;transform:scaleX(0.9642);transform-origin:0 0;">Tipo</div>
<div class="t" style="left:847.50px;top:321.67px;font-size:11.5px;color:#111;font-weight:700;transform:scaleX(1.0126);transform-origin:0 0;">Número</div>
<div class="t" style="left:1016.65px;top:321.67px;font-size:11.5px;color:#111;font-weight:700;">Detalle</div>
<div class="t" style="left:1196.00px;top:321.67px;font-size:11.5px;color:#111;font-weight:700;transform:scaleX(0.9911);transform-origin:0 0;">Estado</div>
<div class="t" style="left:191.50px;top:352.84px;font-size:12px;color:#222;transform:scaleX(0.9448);transform-origin:0 0;">2023-07-06</div>
<div class="t" style="left:286.40px;top:352.84px;font-size:12px;color:#222;transform:scaleX(0.8718);transform-origin:0 0;">EMPRESA PUBLICA DEL AGUA EPA EP</div>
<div class="t" style="left:500.85px;top:352.84px;font-size:12px;color:#222;transform:scaleX(0.8740);transform-origin:0 0;">PEREZ MORENO JUAN ALBERTO</div>
<div class="t" style="left:700.50px;top:352.84px;font-size:12px;color:#222;transform:scaleX(0.9618);transform-origin:0 0;">Solicitud de servicio</div>
<div class="t" style="left:860.00px;top:352.84px;font-size:12px;color:#222;transform:scaleX(0.9489);transform-origin:0 0;">001</div>
<div class="t" style="left:937.50px;top:352.84px;font-size:12px;color:#222;transform:scaleX(0.9634);transform-origin:0 0;">Solicita que se active servicio de agua</div>
<div class="t" style="left:1183.00px;top:352.84px;font-size:12px;color:#222;transform:scaleX(0.8557);transform-origin:0 0;">EN TRAMITE</div>
<div class="t" style="left:191.50px;top:381.84px;font-size:12px;color:#222;transform:scaleX(0.9448);transform-origin:0 0;">2023-07-13</div>
<div class="t" style="left:286.40px;top:381.84px;font-size:12px;color:#222;transform:scaleX(0.8718);transform-origin:0 0;">EMPRESA PUBLICA DEL AGUA EPA EP</div>
<div class="t" style="left:526.60px;top:381.84px;font-size:12px;color:#222;transform:scaleX(0.8651);transform-origin:0 0;">LOPEZ SUAREZ MARIA</div>
<div class="t" style="left:736.35px;top:381.84px;font-size:12px;color:#222;transform:scaleX(0.9462);transform-origin:0 0;">Queja</div>
<div class="t" style="left:860.00px;top:381.84px;font-size:12px;color:#222;transform:scaleX(0.9489);transform-origin:0 0;">002</div>
<div class="t" style="left:923.20px;top:381.84px;font-size:12px;color:#222;transform:scaleX(0.9570);transform-origin:0 0;">Expresa descontento con atención recibida.</div>
<div class="t" style="left:1189.00px;top:381.84px;font-size:12px;color:#222;transform:scaleX(0.8836);transform-origin:0 0;">ATENDIDO</div>
</div>
<svg class="a" style="left:818px;top:343.5px" width="5" height="5"><path d="M0 0H5L0 5Z" fill="#217346"/></svg>
<svg class="a" style="left:818px;top:372.5px" width="5" height="5"><path d="M0 0H5L0 5Z" fill="#217346"/></svg>
<div class="a" style="left:684px;top:467.5px;width:135px;height:18px;border:2px solid #1f5f3e"></div>
<div class="a" style="left:815px;top:482px;width:5px;height:5px;background:#1f5f3e;border:1px solid #fff"></div>
<div class="a" style="left:1208px;top:297px;width:17px;height:353px;background:#fff"></div>
<div class="vl" style="left:1208px;top:297px;height:353px;background:#e6e6e6"></div>
<div class="a" style="left:1211px;top:296px;width:12px;height:12px;border:1px solid #c8c8c8"></div>
<svg class="a" style="left:1213px;top:299px" width="8" height="5"><path d="M0.5 4.5L4 0.5L7.5 4.5Z" fill="#555"/></svg>
<div class="a" style="left:1211px;top:307px;width:12px;height:14px;border:1px solid #c8c8c8"></div>
<div class="a" style="left:1211px;top:638px;width:12px;height:12px;border:1px solid #e0e0e0"></div>
<svg class="a" style="left:1213px;top:642px" width="8" height="5"><path d="M0.5 0.5L4 4.5L7.5 0.5Z" fill="#555"/></svg>
<svg class="a" style="left:854.5px;top:394.5px" width="14" height="20" viewBox="0 0 14 20"><path d="M1 1V15L4.5 11.5L7.5 18L9.5 17L6.5 10.5H11Z" fill="#fff" stroke="#555" stroke-width="0.9"/></svg>
<svg class="a" style="left:862px;top:507px" width="14" height="14" viewBox="0 0 14 14"><path d="M4.5 1H9.5V4.5H13V9.5H9.5V13H4.5V9.5H1V4.5H4.5Z" fill="#fff" stroke="#111" stroke-width="1.3"/></svg>
<div class="a" style="left:140px;top:650px;width:1085px;height:23px;background:#f3f3f3"></div>
<div class="hl" style="left:140px;top:650px;width:1085px;background:#d6d6d6"></div>
<svg class="a" style="left:160px;top:657px" width="30" height="8"><path d="M4 1L1 4L4 7" stroke="#bbb" fill="none"/><path d="M25 1L28 4L25 7" stroke="#bbb" fill="none"/></svg>
<div class="a" style="left:220px;top:650px;width:172px;height:21px;background:#fff;border:1px solid #d0d0d0;border-top:none"></div>
<div class="hl" style="left:220px;top:668.5px;width:172px;height:1.5px;background:#1d3b2b"></div>
<div class="t" style="left:229px;top:655.5px;font-size:10.5px;font-weight:700;color:#1f5c3b;letter-spacing:-0.05px">7. Conjunto de datos (Petitorio</div>
<div class="t" style="left:404.5px;top:655.5px;font-size:10.5px;color:#555;letter-spacing:0.05px">7. Metadatos (Petitorios)</div>
<div class="vl" style="left:533px;top:654px;height:14px;background:#c8c8c8"></div>
<div class="t" style="left:546.5px;top:655.5px;font-size:10.5px;color:#555;letter-spacing:0.05px">7. Diccionario (Petitorios)</div>
<div class="vl" style="left:687px;top:654px;height:14px;background:#c8c8c8"></div>
<svg class="a" style="left:703px;top:654px" width="14" height="14"><circle cx="7" cy="7" r="6" fill="none" stroke="#777" stroke-width="1.2"/><path d="M7 3.5V10.5M3.5 7H10.5" stroke="#777" stroke-width="1.4"/></svg>
<div class="t" style="left:787px;top:655px;font-size:10px;color:#999">&#8942;</div>
<div class="a" style="left:804px;top:654px;width:404px;height:15px;background:#e8e8e8"></div>
<div class="a" style="left:804px;top:654px;width:13px;height:15px;background:#fff;border:1px solid #c8c8c8"></div>
<svg class="a" style="left:808px;top:658px" width="5" height="8"><path d="M4.5 0.5L0.5 4L4.5 7.5Z" fill="#555"/></svg>
<div class="a" style="left:817px;top:654px;width:220px;height:15px;background:#fff;border:1px solid #c8c8c8"></div>
<div class="a" style="left:1195px;top:654px;width:13px;height:15px;background:#fff;border:1px solid #d8d8d8"></div>
<svg class="a" style="left:1199px;top:658px" width="5" height="8"><path d="M0.5 0.5L4.5 4L0.5 7.5Z" fill="#555"/></svg>
<div class="a" style="left:140px;top:673px;width:1085px;height:17px;background:#217346"></div>
<div class="t" style="left:146px;top:677px;font-size:8.5px;color:#fff;letter-spacing:-0.6px">LISTO</div>
<div class="a" style="left:991px;top:673px;width:30px;height:17px;background:#1a5c38"></div>
<svg class="a" style="left:999px;top:675px" width="13" height="12" viewBox="0 0 13 12"><rect x="0.5" y="0.5" width="12" height="11" fill="none" stroke="#fff"/><path d="M0.5 4H12.5M0.5 8H12.5M4.5 0.5V11.5M8.5 0.5V11.5" stroke="#fff"/></svg>
<svg class="a" style="left:1029px;top:675px" width="13" height="12" viewBox="0 0 13 12"><rect x="0.5" y="0.5" width="12" height="11" fill="none" stroke="#fff"/><rect x="3.5" y="3" width="6" height="6" fill="none" stroke="#fff"/></svg>
<svg class="a" style="left:1059px;top:675px" width="13" height="12" viewBox="0 0 13 12"><rect x="0.5" y="0.5" width="12" height="11" fill="none" stroke="#fff"/><rect x="2" y="2" width="5" height="7" fill="#fff"/></svg>
<div class="a" style="left:1086px;top:680px;width:4px;height:1.5px;background:#fff"></div>
<div class="a" style="left:1092px;top:680.5px;width:80px;height:1px;background:#fff"></div>
<div class="a" style="left:1130px;top:676px;width:3px;height:9px;background:#fff"></div>
<div class="t" style="left:1174px;top:675.5px;font-size:11px;color:#fff">+</div>
<div class="t" style="left:1193px;top:677px;font-size:8.5px;color:#fff">100 %</div><div id="taskbar" class="a"></div>
<div id="bstrip" class="a"></div>
<div class="a" style="left:48px;top:728px;width:288px;height:6px;background:#f0f0f0"></div>
<div class="a" style="left:820px;top:728px;width:58px;height:6px;background:#3a3f44"></div>
<div class="a" style="left:1331px;top:690px;width:34px;height:38px;background:#000"></div>
<svg class="a" style="left:49px;top:700px" width="18" height="18" viewBox="0 0 18 18"><path d="M0 2.5L7.5 1.4V8.5H0ZM8.5 1.25L17 0V8.5H8.5ZM0 9.5H7.5V16.6L0 15.5ZM8.5 9.5H17V18L8.5 16.75Z" fill="#fff"/></svg>
<div class="a" style="left:80px;top:690px;width:274px;height:37.5px;background:#f0f0f0"></div>
<svg class="a" style="left:91px;top:701px" width="17" height="17" viewBox="0 0 17 17"><circle cx="10.5" cy="6.5" r="5" fill="none" stroke="#222" stroke-width="1.3"/><path d="M7 10L1 16" stroke="#222" stroke-width="1.4"/></svg>
<div class="t" style="left:119px;top:702.5px;font-size:14px;color:#333;letter-spacing:-0.2px">Buscar</div>
<svg class="a" style="left:278px;top:690px" width="76" height="37.5" viewBox="0 0 76 37.5">
<defs><filter id="cb"><feGaussianBlur stdDeviation="0.5"/></filter></defs>
<g filter="url(#cb)">
<path d="M5 30C8 24 12 18 17 17C21 16 24 19 28 20C32 21 36 23 40 26L40 37.5H5Z" fill="#4f7179"/>
<path d="M60 23C64 21 70 18 76 18V37.5H60Z" fill="#7e7690"/>
<path d="M9 27C18 24 30 24 40 27V37.5H9Z" fill="#86c4e4"/>
<path d="M62 26H76V37.5H62Z" fill="#8ec8e0"/>
<ellipse cx="11" cy="34" rx="8.5" ry="6.5" fill="#ee8a1c"/>
<path d="M15 37.5L21 27L27 37.5Z" fill="#3f9a3a"/>
<ellipse cx="36" cy="35.5" rx="13" ry="8" fill="#a8c83a"/>
<rect x="37" y="12" width="26" height="25.5" fill="#cfd2d6"/><path d="M37 20H63" stroke="#9aa0a8" stroke-width="1"/>
<rect x="40" y="7" width="5" height="18" fill="#fafafa" stroke="#8a8f96" stroke-width="0.8"/><path d="M39.5 8L42.5 1.5L45.5 8Z" fill="#3c3f4a"/>
<rect x="46" y="5" width="6" height="25" fill="#fafafa" stroke="#8a8f96" stroke-width="0.8"/><path d="M45.5 6L49 -1L52.5 6Z" fill="#2f333e"/>
<rect x="58" y="10" width="5" height="22" fill="#fafafa" stroke="#8a8f96" stroke-width="0.8"/><path d="M57.5 11L60.5 4L63.5 11Z" fill="#2f333e"/>
<rect x="49" y="13" width="8" height="4" fill="#6b8ca0"/>
<rect x="41" y="15" width="2" height="2.5" fill="#333"/><rect x="52" y="17" width="2" height="2" fill="#333"/><rect x="45" y="23" width="2" height="2" fill="#333"/><rect x="55" y="21" width="2.5" height="2.5" fill="#333"/>
<rect x="50" y="27" width="18" height="10.5" fill="#d27262"/>
<path d="M50 30H68M50 33H68" stroke="#e89888" stroke-width="0.8"/>
<rect x="68" y="29" width="8" height="8.5" fill="#58a83e"/>
</g></svg>
<div class="a" style="left:48px;top:727.5px;width:306px;height:1px;background:#bdbdbd"></div>
<svg class="a" style="left:367px;top:700px" width="18" height="17" viewBox="0 0 18 17"><path d="M1 1.5H12M1 15.5H12" stroke="#fff" stroke-width="1.5"/><rect x="2" y="4.5" width="9" height="8" fill="none" stroke="#fff" stroke-width="1.6"/><path d="M15.5 1V2.5M15.5 5V16" stroke="#fff" stroke-width="1.8"/></svg>
<svg class="a" style="left:414px;top:699px" width="22" height="18" viewBox="0 0 22 18"><path d="M0 1H8L10 3H22V18H0Z" fill="#e8b84a"/><rect x="0" y="4" width="22" height="14" fill="#f5cc5c"/><rect x="7" y="10" width="8" height="8" fill="#3d8fd6"/><rect x="9.5" y="13" width="3" height="5" fill="#f5cc5c"/></svg>
<svg class="a" style="left:459px;top:696px" width="24" height="24" viewBox="0 0 24 24"><defs><linearGradient id="ff" x1="0" y1="0" x2="0.6" y2="1"><stop offset="0" stop-color="#ffbd2e"/><stop offset="0.5" stop-color="#ff5a36"/><stop offset="1" stop-color="#e31587"/></linearGradient></defs>
<path d="M12 23C6 23 1.5 18.5 1.5 12.5C1.5 9 3 6 5 4.5C5 6 5.5 7 6.5 7.5C7.5 5 9.5 3.5 11 3C11.5 1.5 13 0.5 14.5 0.5C14 2 14.5 3 15.5 3.5C19.5 5 22.5 8.5 22.5 13C22.5 18.5 18 23 12 23Z" fill="url(#ff)"/>
<circle cx="12" cy="12.5" r="5" fill="#7542e5"/><path d="M8 9C10 8 13 8 15 10" stroke="#ff8a3a" stroke-width="1.5" fill="none"/></svg>
<svg class="a" style="left:505px;top:698px" width="25" height="22" viewBox="0 0 25 22"><path d="M0 8L12.5 0L25 8V22H0Z" fill="#1e6fc0"/><rect x="0" y="8" width="25" height="14" fill="#2e9ce8"/><path d="M0 8L12.5 15L25 8Z" fill="#fff"/><path d="M0 22L10 14L15 14L25 22Z" fill="#3aa8ee"/></svg>
<svg class="a" style="left:551px;top:696px" width="26" height="26" viewBox="0 0 26 26"><defs><linearGradient id="eg" x1="0" y1="0" x2="1" y2="0.3"><stop offset="0" stop-color="#1b75c8"/><stop offset="0.6" stop-color="#34b5c9"/><stop offset="1" stop-color="#5ed36a"/></linearGradient></defs>
<path d="M13 1C19.6 1 25 5.5 25 11.5C25 15 22 17 18.5 17C15 17 13 16 13 14C13 12 15 12 15 10C15 7.5 12 6 9 6.5C4.5 7.5 2 11 1.5 14C1.5 6.5 6.5 1 13 1Z" fill="url(#eg)"/>
<path d="M1.5 14C2 8.5 6.5 6.5 9.5 6.5C12 6.5 13.5 8 12 10C9.5 13 10 19 16 22C20 23.5 23 22 24 21C22 23.5 18 25 13.5 25C7 25 1 21 1.5 14Z" fill="#1767b8"/></svg>
<svg class="a" style="left:598px;top:696.5px" width="25" height="25" viewBox="0 0 24 24">
<path d="M12 0.5A11.5 11.5 0 0 1 22 6.25H12A5.75 5.75 0 0 0 7 9.1L2 0.5Z" fill="#ea4335" transform="translate(0 0)"/>
<circle cx="12" cy="12" r="11.5" fill="#34a853"/>
<path d="M12 0.5A11.5 11.5 0 0 1 21.96 6.25L12 6.25L6.98 9.1L2.04 6.25A11.5 11.5 0 0 1 12 0.5Z" fill="#ea4335"/>
<path d="M2.04 6.25L6.98 9.1L2 17.75A11.5 11.5 0 0 1 2.04 6.25Z" fill="#ea4335"/>
<path d="M21.96 6.25A11.5 11.5 0 0 1 12 23.5L17 14.9L12 6.25Z" fill="#fbbc04"/>
<circle cx="12" cy="12" r="5.6" fill="#fff"/><circle cx="12" cy="12" r="4.4" fill="#1a73e8"/></svg>
<svg class="a" style="left:644px;top:698px" width="26" height="22" viewBox="0 0 26 22"><rect x="6" y="0" width="20" height="22" rx="1.5" fill="#2b7cd3"/><rect x="6" y="0" width="20" height="6" fill="#41a5ee"/><rect x="6" y="11" width="20" height="6" fill="#185abd"/><rect x="6" y="17" width="20" height="5" fill="#103f91"/><rect x="0" y="4" width="14" height="14" rx="1" fill="#185abd"/><path d="M2.5 7L4.3 15L7 9L9.7 15L11.5 7" stroke="#fff" stroke-width="1.5" fill="none"/></svg>
<svg class="a" style="left:690px;top:698px" width="26" height="22" viewBox="0 0 26 22"><rect x="6" y="0" width="20" height="22" rx="1.5" fill="#21a366"/><rect x="16" y="0" width="10" height="11" fill="#33c481"/><rect x="6" y="11" width="20" height="11" fill="#107c41"/><rect x="16" y="11" width="10" height="11" fill="#185c37"/><rect x="0" y="4" width="14" height="14" rx="1" fill="#107c41"/><path d="M3.5 7L10.5 15M10.5 7L3.5 15" stroke="#fff" stroke-width="1.8"/></svg>
<svg class="a" style="left:739.5px;top:698px" width="21" height="21" viewBox="0 0 21 21"><rect width="21" height="21" rx="1.5" fill="#c8141b"/><path d="M4 16C6 13 9 9 10 4C10.5 2.5 11.5 3 11 5C10 9 13 13 17 14C15 15 11 14 8 14C6 15 4.5 17 4 16Z" fill="none" stroke="#fff" stroke-width="1.4"/></svg>
<svg class="a" style="left:785px;top:696.5px" width="25" height="25" viewBox="0 0 25 25"><circle cx="11.5" cy="11.5" r="10.5" fill="#302e31" stroke="#d8d8d8" stroke-width="1.4"/><path d="M11.5 3.5A4 4 0 1 1 8 8.5M5 14A4 4 0 1 1 11 16M17.5 15A4 4 0 1 1 13 9" stroke="#d8d8d8" stroke-width="1.5" fill="none"/><circle cx="18.5" cy="18.5" r="5.3" fill="#ee1111"/></svg>
<div class="a" style="left:820.5px;top:690px;width:44px;height:38px;background:#3b3b3b"></div>
<svg class="a" style="left:831px;top:697px" width="24" height="24" viewBox="0 0 24 24"><defs><radialGradient id="zg2" cx="50%" cy="35%" r="65%"><stop offset="0" stop-color="#3d8bff"/><stop offset="1" stop-color="#0b4fd0"/></radialGradient></defs><circle cx="12" cy="12" r="11.5" fill="url(#zg2)"/><path d="M6.5 7H17L7 17H17.5" stroke="#fff" stroke-width="3.2" fill="none" stroke-linejoin="round"/></svg>
<div class="a" style="left:591px;top:725.5px;width:39px;height:2px;background:#a8cdf0"></div>
<div class="a" style="left:638px;top:725.5px;width:39px;height:2px;background:#a8cdf0"></div>
<div class="a" style="left:778px;top:725.5px;width:38px;height:2px;background:#a8cdf0"></div>
<div class="a" style="left:821px;top:725.5px;width:44px;height:2px;background:#a8cdf0"></div>
<svg class="a" style="left:1009px;top:699px" width="25" height="22" viewBox="0 0 25 22"><path d="M3 3C8 0 16 0 21 2C24 3 25 5 22 7C25 9 24 12 20 13C14 15 8 15 4 13C1 12 0 9 3 8C0 6 0 4 3 3Z" fill="#f5a623"/><path d="M12 14V20M8.5 17.5L12 14.5L15.5 17.5" stroke="#5fc03a" stroke-width="2" fill="none"/></svg>
<div class="t" style="left:1040.5px;top:702px;font-size:13.3px;color:#fff">USD...</div>
<svg class="a" style="left:1100px;top:704px" width="13" height="9" viewBox="0 0 13 9"><path d="M1 8L6.5 2L12 8" stroke="#fff" stroke-width="1.4" fill="none"/></svg>
<svg class="a" style="left:1122px;top:700px" width="14" height="18" viewBox="0 0 14 18"><rect x="1" y="5" width="9" height="8" rx="1.5" fill="none" stroke="#fff" stroke-width="1.3"/><path d="M10 7.5L13 5.5V12.5L10 10.5" stroke="#fff" stroke-width="1.2" fill="none"/><path d="M2 2.5C4 1 8 1 10 2.5M2 15.5C4 17 8 17 10 15.5" stroke="#ccc" stroke-width="1" fill="none"/><circle cx="5.5" cy="9" r="1.6" fill="#fff"/></svg>
<svg class="a" style="left:1146px;top:701px" width="15" height="16" viewBox="0 0 15 16"><path d="M1 15A13 13 0 0 1 14 2M4 15A10 10 0 0 1 14 5M7 15A7 7 0 0 1 14 8M10 15A4 4 0 0 1 14 11" stroke="#fff" stroke-width="1.1" fill="none"/><circle cx="13" cy="14" r="1.5" fill="#fff"/></svg>
<svg class="a" style="left:1166px;top:701px" width="17" height="16" viewBox="0 0 17 16"><path d="M1 5.5H4L8 1.5V14.5L4 10.5H1Z" fill="none" stroke="#fff" stroke-width="1.3"/><path d="M10.5 5C11.5 6 11.5 10 10.5 11M13 3C15 5 15 11 13 13" stroke="#ddd" stroke-width="1.1" fill="none"/></svg>
<div class="t" style="left:1193px;top:704px;font-size:11.3px;color:#fff;letter-spacing:-0.5px">ESP</div>
<div class="t" style="left:1237px;top:694.5px;font-size:11.3px;color:#fff;letter-spacing:-0.3px">12:11</div>
<div class="t" style="left:1225px;top:711px;font-size:11.3px;color:#fff;letter-spacing:-0.4px">5/12/2023</div>
<svg class="a" style="left:1291px;top:700px" width="18" height="17" viewBox="0 0 18 17"><path d="M1.5 1.5H16.5V12.5H11L9 15L7 12.5H1.5Z" fill="none" stroke="#fff" stroke-width="1.5"/></svg>
<div class="a" style="left:1326px;top:690px;width:1.2px;height:38px;background:#9a9a9a"></div>
</body></html>
